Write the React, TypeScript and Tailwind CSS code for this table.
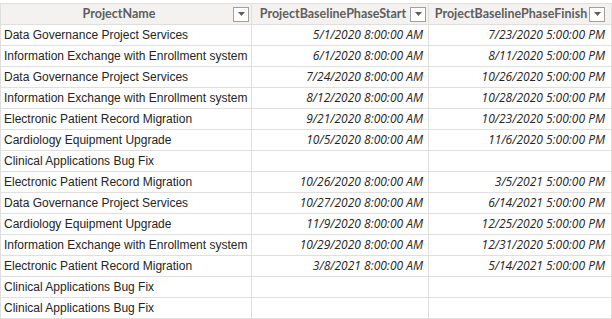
const rows: [string, string, string][] = [
  ['Data Governance Project Services', '5/1/2020 8:00:00 AM', '7/23/2020 5:00:00 PM'],
  ['Information Exchange with Enrollment system', '6/1/2020 8:00:00 AM', '8/11/2020 5:00:00 PM'],
  ['Data Governance Project Services', '7/24/2020 8:00:00 AM', '10/26/2020 5:00:00 PM'],
  ['Information Exchange with Enrollment system', '8/12/2020 8:00:00 AM', '10/28/2020 5:00:00 PM'],
  ['Electronic Patient Record Migration', '9/21/2020 8:00:00 AM', '10/23/2020 5:00:00 PM'],
  ['Cardiology Equipment Upgrade', '10/5/2020 8:00:00 AM', '11/6/2020 5:00:00 PM'],
  ['Clinical Applications Bug Fix', '', ''],
  ['Electronic Patient Record Migration', '10/26/2020 8:00:00 AM', '3/5/2021 5:00:00 PM'],
  ['Data Governance Project Services', '10/27/2020 8:00:00 AM', '6/14/2021 5:00:00 PM'],
  ['Cardiology Equipment Upgrade', '11/9/2020 8:00:00 AM', '12/25/2020 5:00:00 PM'],
  ['Information Exchange with Enrollment system', '10/29/2020 8:00:00 AM', '12/31/2020 5:00:00 PM'],
  ['Electronic Patient Record Migration', '3/8/2021 8:00:00 AM', '5/14/2021 5:00:00 PM'],
  ['Clinical Applications Bug Fix', '', ''],
  ['Clinical Applications Bug Fix', '', ''],
]

function FilterButton() {
  return (
    <div className="w-[16px] h-[15px] shrink-0 border border-[#a19f9d] bg-white flex items-center justify-center">
      <svg width="7" height="4" viewBox="0 0 7 4">
        <path d="M0 0h7L3.5 4z" fill="#605e5c" />
      </svg>
    </div>
  )
}

function HeaderCell({ title, pr }: { title: string; pr: string }) {
  return (
    <div className={`h-[21px] flex items-center border-r border-b border-[#e1dfdd] bg-[#f3f2f1] pl-1 ${pr}`}>
      <span className="flex-1 text-center font-bold text-[#605e5c] whitespace-nowrap font-['Lato',sans-serif] text-[12.5px]">{title}</span>
      <FilterButton />
    </div>
  )
}

export default function App() {
  return (
    <div className="w-[612px] h-[319px] bg-white overflow-hidden pt-[3px] text-[12px] text-[#252423] font-['Liberation_Sans',Arial,sans-serif]">
      <div className="grid grid-cols-[251px_177px_183px] border-l border-t border-[#e1dfdd] w-[612px]">
        <HeaderCell title="ProjectName" pr="pr-[2px]" />
        <HeaderCell title="ProjectBaselinePhaseStart" pr="pr-[2px]" />
        <HeaderCell title="ProjectBaselinePhaseFinish" pr="pr-[6px]" />
        {rows.map((r, i) => (
          <div key={i} className="contents">
            <div className="h-[21px] flex items-center border-r border-b border-[#e1dfdd] pl-[3px] whitespace-nowrap overflow-hidden">
              {r[0]}
            </div>
            <div className="h-[21px] flex items-center justify-end border-r border-b border-[#e1dfdd] pr-[5px] italic whitespace-nowrap font-['Open_Sans',sans-serif]">
              {r[1]}
            </div>
            <div className="h-[21px] flex items-center justify-end border-r border-b border-[#e1dfdd] pr-[6px] italic whitespace-nowrap font-['Open_Sans',sans-serif]">
              {r[2]}
            </div>
          </div>
        ))}
      </div>
    </div>
  )
}
